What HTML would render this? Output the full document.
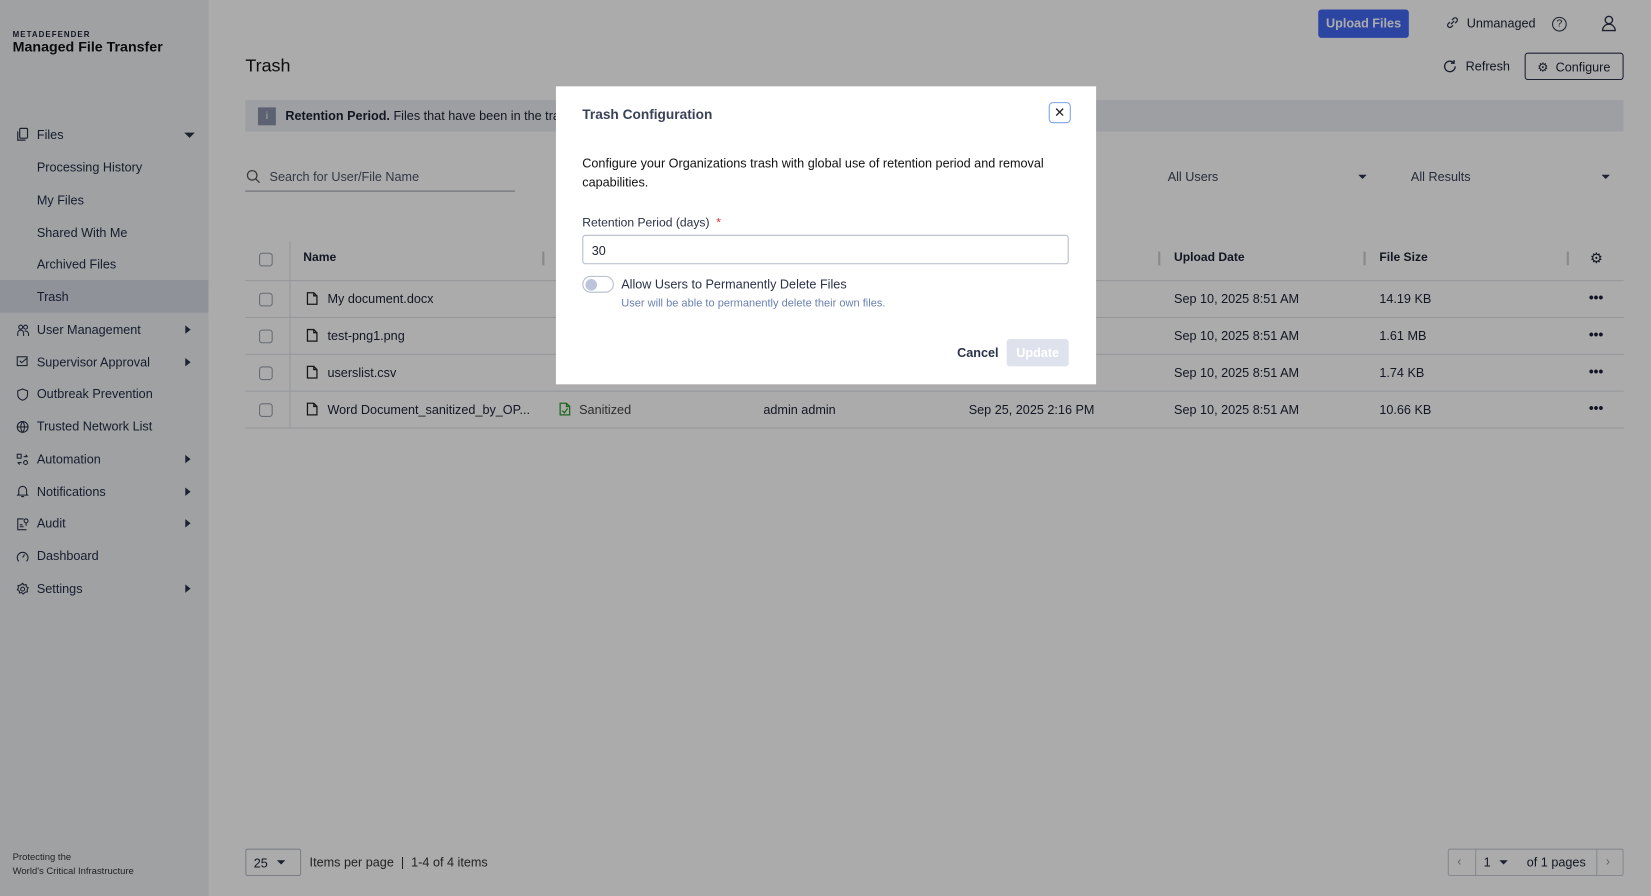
<!DOCTYPE html>
<html><head><meta charset="utf-8">
<style>
*{box-sizing:border-box;margin:0;padding:0}
html,body{width:1651px;height:896px;overflow:hidden;background:#fff}
body{font-family:"Liberation Sans",Arial,sans-serif;color:#1b2233}
#s{position:absolute;left:0;top:0;width:1568px;height:851px;transform:scale(1.05293);transform-origin:0 0;background:#fff}
.a{position:absolute;white-space:nowrap}
.sb{position:absolute;left:0;top:0;width:198px;height:851px;background:#eef0f4}
.ni{position:absolute;left:35px;font-size:12px;color:#1f2a44}
.ic{position:absolute;left:15px;width:13px;height:13px}
.car{position:absolute;left:176px;width:0;height:0;border-top:4px solid transparent;border-bottom:4px solid transparent;border-left:5px solid #2a3247}
.t{font-size:12px;color:#1b2233}
.hl{position:absolute;left:233px;width:1309px;height:1px;background:#dfe2e8}
.cb{position:absolute;left:246px;width:13px;height:13px;border:1.3px solid #9aa0ac;border-radius:3px;background:#fff}
.dots{position:absolute;left:1509px;font-size:13px;font-weight:bold;letter-spacing:0px}
.fi{position:absolute;left:291px;width:11px;height:13px}
#ov{position:absolute;left:0;top:0;width:1568px;height:851px;background:rgba(0,0,0,0.33)}
#m{position:absolute;left:528px;top:82px;width:513px;height:283px;background:#fff}
</style></head><body><div id="s">
<div class="sb">
<div class="a" style="left:12px;top:28px;font-size:7.5px;font-weight:bold;letter-spacing:1px">METADEFENDER</div>
<div class="a" style="left:12px;top:37px;font-size:13.5px;font-weight:bold;color:#111">Managed File Transfer</div>
<svg class="ic" style="top:121px" viewBox="0 0 14 14" fill="none" stroke="#2a3247" stroke-width="1.2"><rect x="4" y="1" width="8" height="10" rx="1"/><path d="M2 4v9h8"/></svg>
<div class="ni" style="top:121px">Files</div>
<div class="a" style="left:175px;top:126px;border-left:5px solid transparent;border-right:5px solid transparent;border-top:5px solid #2a3247"></div>
<div class="ni" style="top:152px">Processing History</div>
<div class="ni" style="top:183px">My Files</div>
<div class="ni" style="top:214px">Shared With Me</div>
<div class="ni" style="top:244px">Archived Files</div>
<div class="a" style="left:0;top:266px;width:198px;height:31px;background:#d6dae4"></div>
<div class="ni" style="top:275px">Trash</div>
<div class="ni" style="top:306px">User Management</div><div class="car" style="top:309px"></div>
<div class="ni" style="top:337px">Supervisor Approval</div><div class="car" style="top:340px"></div>
<div class="ni" style="top:367px">Outbreak Prevention</div>
<div class="ni" style="top:398px">Trusted Network List</div>
<div class="ni" style="top:429px">Automation</div><div class="car" style="top:432px"></div>
<div class="ni" style="top:460px">Notifications</div><div class="car" style="top:463px"></div>
<div class="ni" style="top:490px">Audit</div><div class="car" style="top:493px"></div>
<div class="ni" style="top:521px">Dashboard</div>
<div class="ni" style="top:552px">Settings</div><div class="car" style="top:555px"></div>
<svg class="ic" style="top:307px" viewBox="0 0 14 14" fill="none" stroke="#2a3247" stroke-width="1.1"><circle cx="5" cy="4" r="2"/><circle cx="10" cy="4" r="2"/><path d="M2 13v-3a3 3 0 016 0v3M9 8h1a3 3 0 013 3v2"/></svg>
<svg class="ic" style="top:337px" viewBox="0 0 14 14" fill="none" stroke="#2a3247" stroke-width="1.1"><rect x="1.5" y="2" width="10" height="9"/><path d="M4 6l2 2 6-5"/></svg>
<svg class="ic" style="top:368px" viewBox="0 0 14 14" fill="none" stroke="#2a3247" stroke-width="1.1"><path d="M7 1.5l5 2v4c0 3-2.5 5-5 5.5-2.5-.5-5-2.5-5-5.5v-4z"/></svg>
<svg class="ic" style="top:399px" viewBox="0 0 14 14" fill="none" stroke="#2a3247" stroke-width="1.1"><circle cx="7" cy="7" r="5.5"/><path d="M1.5 7h11M7 1.5c-2.5 3-2.5 8 0 11M7 1.5c2.5 3 2.5 8 0 11"/></svg>
<svg class="ic" style="top:430px" viewBox="0 0 14 14" fill="none" stroke="#2a3247" stroke-width="1.1"><rect x="1.5" y="1.5" width="4" height="4"/><circle cx="10" cy="10" r="2"/><path d="M8 4h4M10 2l2 2M2 10h4M4 12l-2-2"/></svg>
<svg class="ic" style="top:460px" viewBox="0 0 14 14" fill="none" stroke="#2a3247" stroke-width="1.1"><path d="M3 10V6a4 4 0 018 0v4l1 1H2zM5.5 12.5h3"/></svg>
<svg class="ic" style="top:491px" viewBox="0 0 14 14" fill="none" stroke="#2a3247" stroke-width="1.1"><path d="M8 2H2v11h9M4 8h3M4 10h4"/><circle cx="10.5" cy="4" r="2"/><path d="M10.5 6v3"/></svg>
<svg class="ic" style="top:522px" viewBox="0 0 14 14" fill="none" stroke="#2a3247" stroke-width="1.1"><path d="M3 12a5.5 5.5 0 118 0M7 8l2-3"/></svg>
<svg class="ic" style="top:553px" viewBox="0 0 14 14" fill="none" stroke="#2a3247" stroke-width="1.1"><circle cx="7" cy="7" r="2"/><path d="M7 1l1.3 1.8 2.2-.5.3 2.2 1.9 1.2-1.2 1.9.5 2.2-2.2.3L7.5 12 6 10.5l-2.2.5-.3-2.2L1.6 7.5 2.8 5.6 2.3 3.4l2.2-.3z"/></svg>
<div class="a" style="left:12px;top:808px;font-size:9px;line-height:13px;color:#333">Protecting the<br>World's Critical Infrastructure</div>
</div>

<div class="a" style="left:1252px;top:9px;width:86px;height:27px;background:#4268f2;border-radius:3px;color:#fff;font-size:12px;font-weight:bold;text-align:center;line-height:27px">Upload Files</div>
<svg class="a" style="left:1373px;top:15px" width="13" height="13" viewBox="0 0 13 13" fill="none" stroke="#2a3247" stroke-width="1.2"><path d="M5 8L8 5M4 6L2.5 7.5a2 2 0 003 3L7 9M9 7l1.5-1.5a2 2 0 00-3-3L6 4"/></svg>
<div class="a t" style="left:1393px;top:15px">Unmanaged</div>
<div class="a" style="left:1474px;top:16px;width:14px;height:14px;border:1.3px solid #2a3247;border-radius:50%;font-size:10px;text-align:center;line-height:12px">?</div>
<svg class="a" style="left:1521px;top:14px" width="14" height="16" viewBox="0 0 14 16" fill="none" stroke="#2a3247" stroke-width="1.3"><circle cx="7" cy="5" r="3.5"/><path d="M1 15a6 6 0 0112 0z"/></svg>

<div class="a" style="left:233px;top:53px;font-size:17px;color:#111">Trash</div>
<svg class="a" style="left:1370px;top:56px" width="14" height="14" viewBox="0 0 14 14" fill="none" stroke="#2a3247" stroke-width="1.3"><path d="M12 7a5 5 0 11-1.5-3.5M11 1v3H8"/></svg>
<div class="a t" style="left:1392px;top:56px">Refresh</div>
<div class="a t" style="left:1448px;top:50px;width:94px;height:26px;border:1.3px solid #2a3247;border-radius:3px;padding:6px 0 0 11px">&#9881;&nbsp;&nbsp;Configure</div>

<div class="a" style="left:233px;top:95px;width:1309px;height:30px;background:#eceef2"></div>
<div class="a" style="left:245px;top:102px;width:17px;height:17px;background:#8a93ab;color:#fff;font-size:10px;text-align:center;line-height:17px">i</div>
<div class="a t" style="left:271px;top:103px"><b>Retention Period.</b> Files that have been in the trash</div>

<svg class="a" style="left:234px;top:161px" width="13" height="13" viewBox="0 0 13 13" fill="none" stroke="#555" stroke-width="1.2"><circle cx="5.5" cy="5.5" r="4.5"/><path d="M9 9l3.5 3.5"/></svg>
<div class="a" style="left:256px;top:161px;font-size:12px;color:#4c5466">Search for User/File Name</div>
<div class="a" style="left:233px;top:181px;width:256px;height:1px;background:#9aa0ac"></div>
<div class="a t" style="left:1109px;top:161px;color:#3a4256">All Users</div>
<div class="a" style="left:1290px;top:166px;border-left:4px solid transparent;border-right:4px solid transparent;border-top:4px solid #2a3247"></div>
<div class="a t" style="left:1340px;top:161px;color:#3a4256">All Results</div>
<div class="a" style="left:1521px;top:166px;border-left:4px solid transparent;border-right:4px solid transparent;border-top:4px solid #2a3247"></div>

<div class="a" style="left:275px;top:229px;width:1px;height:177px;background:#dfe2e8"></div>
<div class="a" style="left:515px;top:239px;width:2px;height:13px;background:#ccc"></div>
<div class="a" style="left:1100px;top:239px;width:2px;height:13px;background:#ccc"></div>
<div class="a" style="left:1295px;top:239px;width:2px;height:13px;background:#ccc"></div>
<div class="a" style="left:1488px;top:239px;width:2px;height:13px;background:#ccc"></div>
<div class="cb" style="top:240px"></div>
<div class="a t" style="left:288px;top:239px;font-weight:bold;font-size:11.5px">Name</div>
<div class="a t" style="left:1115px;top:239px;font-weight:bold;font-size:11.5px">Upload Date</div>
<div class="a t" style="left:1310px;top:239px;font-weight:bold;font-size:11.5px">File Size</div>
<div class="a" style="left:1510px;top:237px;font-size:14px">&#9881;</div>
<div class="hl" style="top:266px"></div><div class="hl" style="top:301px"></div><div class="hl" style="top:336px"></div><div class="hl" style="top:371px"></div><div class="hl" style="top:406px"></div>

<svg class="fi" style="top:277px" viewBox="0 0 11 13" fill="none" stroke="#222" stroke-width="1.2"><path d="M1 1h6l3 3v8H1zM7 1v3h3"/></svg>
<svg class="fi" style="top:312px" viewBox="0 0 11 13" fill="none" stroke="#222" stroke-width="1.2"><path d="M1 1h6l3 3v8H1zM7 1v3h3"/></svg>
<svg class="fi" style="top:347px" viewBox="0 0 11 13" fill="none" stroke="#222" stroke-width="1.2"><path d="M1 1h6l3 3v8H1zM7 1v3h3"/></svg>
<svg class="fi" style="top:382px" viewBox="0 0 11 13" fill="none" stroke="#222" stroke-width="1.2"><path d="M1 1h6l3 3v8H1zM7 1v3h3"/></svg>
<svg class="fi" style="top:382px;left:531px" viewBox="0 0 11 13" fill="none" stroke="#2e9a2e" stroke-width="1.2"><path d="M1 1h6l3 3v8H1zM7 1v3h3M3 8l2 2 3-4"/></svg>

<div class="cb" style="top:278px"></div><div class="a t" style="left:311px;top:277px">My document.docx</div><div class="a t" style="left:1115px;top:277px">Sep 10, 2025 8:51 AM</div><div class="a t" style="left:1310px;top:277px">14.19 KB</div><div class="dots" style="top:275px">•••</div>
<div class="cb" style="top:313px"></div><div class="a t" style="left:311px;top:312px">test-png1.png</div><div class="a t" style="left:1115px;top:312px">Sep 10, 2025 8:51 AM</div><div class="a t" style="left:1310px;top:312px">1.61 MB</div><div class="dots" style="top:310px">•••</div>
<div class="cb" style="top:348px"></div><div class="a t" style="left:311px;top:347px">userslist.csv</div><div class="a t" style="left:1115px;top:347px">Sep 10, 2025 8:51 AM</div><div class="a t" style="left:1310px;top:347px">1.74 KB</div><div class="dots" style="top:345px">•••</div>
<div class="cb" style="top:383px"></div><div class="a t" style="left:311px;top:382px">Word Document_sanitized_by_OP...</div>
<div class="a t" style="left:550px;top:382px;color:#444">Sanitized</div>
<div class="a t" style="left:725px;top:382px">admin admin</div><div class="a t" style="left:920px;top:382px">Sep 25, 2025 2:16 PM</div><div class="a t" style="left:1115px;top:382px">Sep 10, 2025 8:51 AM</div><div class="a t" style="left:1310px;top:382px">10.66 KB</div><div class="dots" style="top:380px">•••</div>

<div class="a t" style="left:233px;top:806px;width:53px;height:26px;border:1px solid #b8bdc8;border-radius:2px;padding:6px 0 0 7px">25</div>
<div class="a" style="left:263px;top:817px;border-left:4px solid transparent;border-right:4px solid transparent;border-top:4px solid #2a3247"></div>
<div class="a t" style="left:294px;top:812px;color:#333">Items per page &nbsp;|&nbsp; 1-4 of 4 items</div>
<div class="a" style="left:1375px;top:806px;width:167px;height:26px;border:1px solid #c8ccd5;border-radius:2px"></div>
<div class="a" style="left:1401px;top:806px;width:1px;height:26px;background:#c8ccd5"></div>
<div class="a" style="left:1516px;top:806px;width:1px;height:26px;background:#c8ccd5"></div>
<div class="a" style="left:1384px;top:811px;color:#999;font-size:12px">&lsaquo;</div>
<div class="a" style="left:1525px;top:811px;color:#999;font-size:12px">&rsaquo;</div>
<div class="a t" style="left:1409px;top:812px">1</div>
<div class="a" style="left:1424px;top:817px;border-left:4px solid transparent;border-right:4px solid transparent;border-top:4px solid #2a3247"></div>
<div class="a t" style="left:1450px;top:812px">of 1 pages</div>

<div id="ov"></div>
<div id="m">
<div class="a" style="left:25px;top:19px;font-size:13px;font-weight:bold;color:#3a4258">Trash Configuration</div>
<div class="a" style="left:468px;top:15px;width:21px;height:20px;border:1.3px solid #7aa2e8;border-radius:4px;text-align:center;font-size:13px;line-height:17px;color:#222">&#10005;</div>
<div class="a" style="left:25px;top:64px;font-size:12px;line-height:18px;color:#111;white-space:normal;width:460px">Configure your Organizations trash with global use of retention period and removal capabilities.</div>
<div class="a" style="left:25px;top:124px;font-size:11.5px;color:#2a3247">Retention Period (days) &nbsp;<span style="color:#d33">*</span></div>
<div class="a" style="left:25px;top:141px;width:462px;height:28px;border:1px solid #b4bbcc;border-radius:3px;font-size:12px;padding:7px 0 0 8px">30</div>
<div class="a" style="left:25px;top:180px;width:30px;height:16px;border:1px solid #b4bbcc;border-radius:8px"><div style="position:absolute;left:2px;top:2px;width:11px;height:11px;border-radius:50%;background:#bcc4dc"></div></div>
<div class="a" style="left:62px;top:181px;font-size:12px;color:#2a3247">Allow Users to Permanently Delete Files</div>
<div class="a" style="left:62px;top:200px;font-size:10.5px;color:#6a80b0">User will be able to permanently delete their own files.</div>
<div class="a" style="left:381px;top:246px;font-size:12px;font-weight:bold;color:#2a3247">Cancel</div>
<div class="a" style="left:428px;top:240px;width:59px;height:26px;background:#dde2ec;border-radius:3px;color:#fff;font-size:12px;font-weight:bold;text-align:center;line-height:26px">Update</div>
</div>
</div></body></html>
